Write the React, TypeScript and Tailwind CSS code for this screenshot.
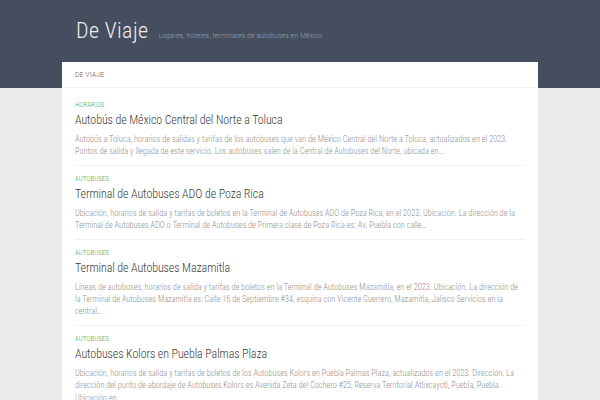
const posts = [
  {
    cat: "HORARIOS",
    title: "Autobús de México Central del Norte a Toluca",
    excerpt:
      "Autobús a Toluca, horarios de salidas y tarifas de los autobuses que van de México Central del Norte a Toluca, actualizados en el 2023. Puntos de salida y llegada de este servicio. Los autobuses salen de la Central de Autobuses del Norte, ubicada en…",
  },
  {
    cat: "AUTOBUSES",
    title: "Terminal de Autobuses ADO de Poza Rica",
    excerpt:
      "Ubicación, horarios de salida y tarifas de boletos en la Terminal de Autobuses ADO de Poza Rica, en el 2023.   Ubicación. La dirección de la Terminal de Autobuses ADO o Terminal de Autobuses de Primera clase de Poza Rica es: Av. Puebla con calle…",
  },
  {
    cat: "AUTOBUSES",
    title: "Terminal de Autobuses Mazamitla",
    excerpt:
      "Líneas de autobuses, horarios de salida y tarifas de boletos en la Terminal de Autobuses Mazamitla, en el 2023.   Ubicación. La dirección de la Terminal de Autobuses Mazamitla es: Calle 16 de Septiembre #34, esquina con Vicente Guerrero, Mazamitla, Jalisco Servicios en la central…",
  },
  {
    cat: "AUTOBUSES",
    title: "Autobuses Kolors en Puebla Palmas Plaza",
    excerpt:
      "Ubicación, horarios de salida y tarifas de boletos de los Autobuses Kolors en Puebla Palmas Plaza, actualizados en el 2023.   Dirección. La dirección del punto de abordaje de Autobuses Kolors es Avenida Zeta del Cochero #25, Reserva Territorial Atlixcayotl, Puebla, Puebla. Ubicación en…",
  },
];

export default function App() {
  return (
    <div className="min-h-screen bg-[#eaeaea] font-['Roboto_Condensed','Roboto',sans-serif]">
      {/* Header */}
      <header className="bg-[#454e5e]">
        <div className="mx-[62px] flex items-baseline px-[14px] pt-[16px] pb-[43px]">
          <h1 className="text-[22px] leading-[29px] font-light tracking-[0.4px] text-[#eef0f2]">
            De Viaje
          </h1>
          <p className="ml-[10px] text-[8px] font-light text-[#959cab] whitespace-nowrap">
            Lugares, hoteles, terminales de autobuses en México
          </p>
        </div>
      </header>

      <div className="-mt-[26px] mx-[62px] bg-white">
        {/* Nav */}
        <nav className="h-[26px] border-b border-[#f0f0f0] px-[13px] flex items-center">
          <span className="text-[8px] font-light uppercase text-[#666]">De Viaje</span>
        </nav>

        {/* Posts */}
        <div className="px-[13px] pt-[4px]">
          {posts.map((p, i) => (
            <article key={i} className="border-b border-[#f0f0f0] pt-[8px] pb-[7px]">
              <div className="text-[7px] font-light leading-[10px] text-[#5fa83f]">{p.cat}</div>
              <h2 className="mt-[2px] text-[12px] font-light leading-[16px] text-[#3a3a3a] tracking-[-0.1px]">
                {p.title}
              </h2>
              <p className="mt-[5px] text-[8.3px] font-light leading-[12.4px] text-[#8f8f8f]">
                {p.excerpt}
              </p>
            </article>
          ))}
        </div>
      </div>
    </div>
  );
}
